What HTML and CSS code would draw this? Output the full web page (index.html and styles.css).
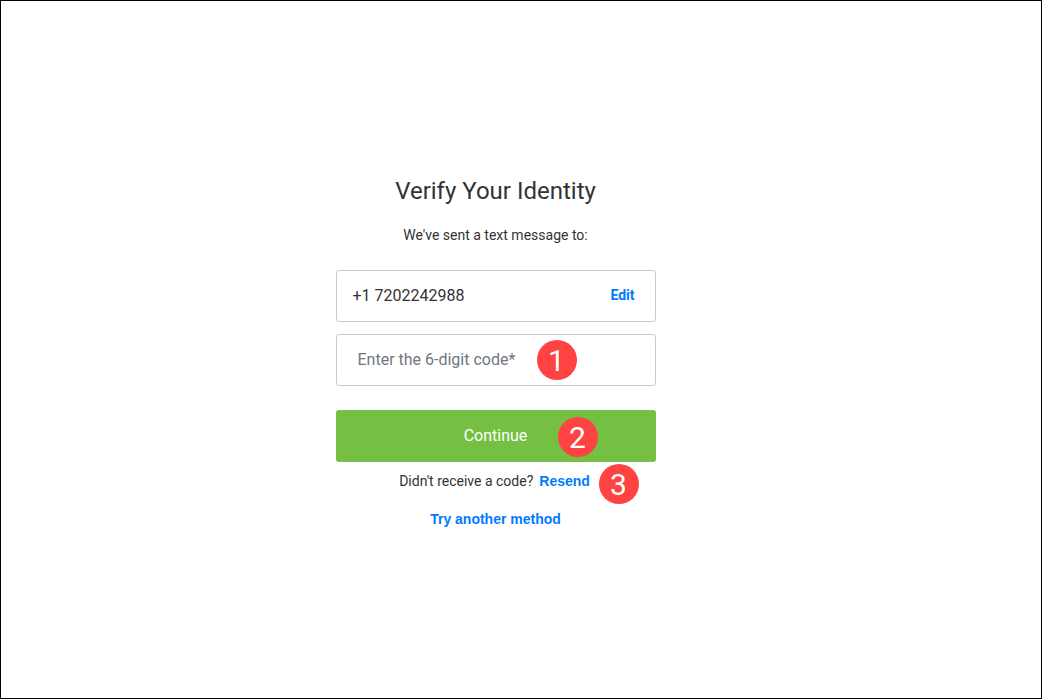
FILE: index.html
```html
<!DOCTYPE html>
<html lang="en">
<head>
<meta charset="utf-8">
<title>Verify Your Identity</title>
<link rel="stylesheet" href="styles.css">
</head>
<body>
<main class="page">
  <form class="card">
    <h1 class="title">Verify Your Identity</h1>
    <p class="lead">We've sent a text message to:</p>
    <div class="phone">
      <span>+1 7202242988</span>
      <a class="link edit" href="#">Edit</a>
    </div>
    <div class="field">
      <input class="code" type="text" inputmode="numeric" placeholder="Enter the 6-digit code*" aria-label="Enter the 6-digit code">
      <span class="badge badge-code">1</span>
    </div>
    <div class="action">
      <button class="continue" type="submit">Continue</button>
      <span class="badge badge-continue">2</span>
    </div>
    <div class="resend">
      <span>Didn't receive a code?</span>
      <button class="link" type="button">Resend</button>
      <span class="badge badge-resend">3</span>
    </div>
    <button class="link another" type="button">Try another method</button>
  </form>
</main>
</body>
</html>
```
FILE: styles.css
```css
* {
  box-sizing: border-box;
}

body {
  margin: 0;
  background: #fff;
  color: #333;
  font: 14px/20px Roboto, "Liberation Sans", sans-serif;
}

.page {
  display: flex;
  justify-content: center;
  min-height: 100vh;
  padding: 175px 51px 24px 0;
  border: 1px solid #000;
}

.card {
  display: flex;
  flex-direction: column;
  width: 100%;
  max-width: 320px;
}

.title {
  margin: 0 0 19px;
  font-size: 24px;
  line-height: 30px;
  font-weight: 400;
  text-align: center;
}

.lead {
  margin: 0 0 25px;
  text-align: center;
}

.phone {
  display: flex;
  align-items: center;
  justify-content: space-between;
  height: 52px;
  padding: 0 20px 0 16px;
  border: 1px solid #c9cace;
  border-radius: 3px;
  font-size: 16px;
}

.link {
  padding: 0;
  border: 0;
  background: none;
  color: #007bff;
  font: bold 14px/20px "Liberation Sans", Arial, sans-serif;
  text-decoration: none;
  cursor: pointer;
}

.edit {
  padding-bottom: 2px;
  font-family: Roboto, sans-serif;
}

.field,
.action,
.resend {
  position: relative;
}

.field {
  margin: 12px 0 24px;
}

.code,
.continue {
  display: block;
  width: 100%;
  height: 52px;
  border-radius: 3px;
  font: 16px/20px Roboto, "Liberation Sans", sans-serif;
}

.code {
  padding: 0 21px 2px;
  border: 1px solid #c9cace;
  background: #fff;
  color: #333;
}

.code::placeholder {
  color: #6f7780;
  opacity: 1;
}

.continue {
  border: 0;
  background: #75bf43;
  color: #fff;
  cursor: pointer;
}

.resend {
  display: flex;
  justify-content: center;
  gap: 6px;
  margin: 9px 0 18px;
  padding-right: 2px;
}

.another {
  align-self: center;
}

.badge {
  position: absolute;
  width: 40px;
  height: 40px;
  border-radius: 50%;
  background: #ff4242;
  color: #fff;
  font: 30px/42px Roboto, Arial, sans-serif;
  text-align: center;
}

.badge-code {
  top: 6px;
  right: 79px;
}

.badge-continue {
  top: 7px;
  right: 58px;
}

.badge-resend {
  top: -7px;
  right: 17px;
}
```
